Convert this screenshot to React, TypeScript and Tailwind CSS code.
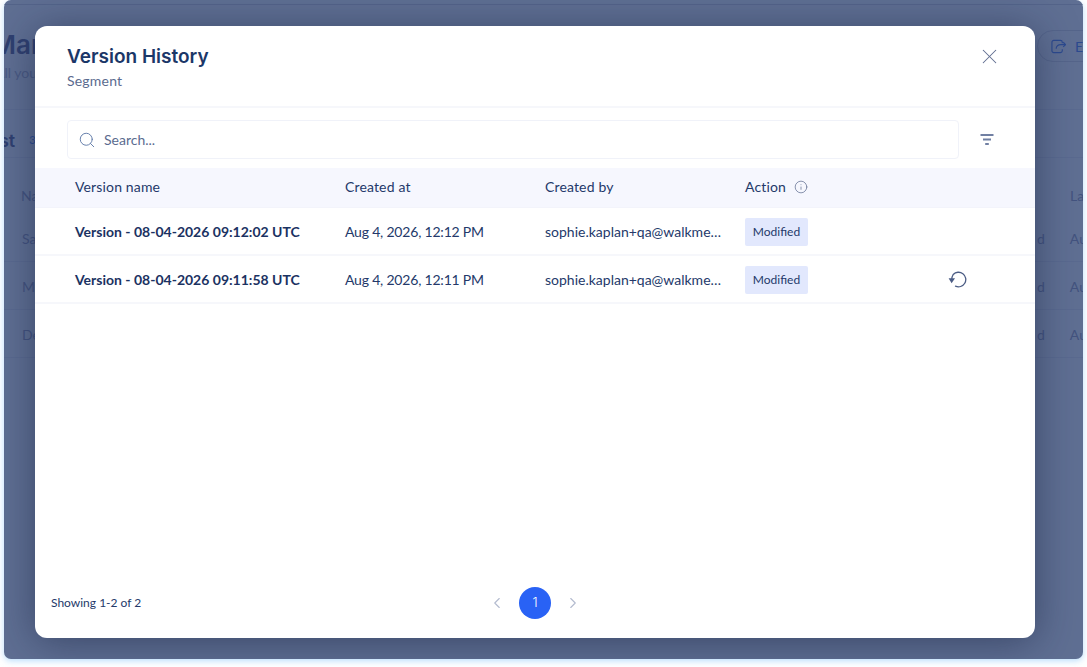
import { ChevronLeft, ChevronRight, Info, Search, X } from "lucide-react";

const VERSIONS = [
  { name: "Version - 08-04-2026 09:12:02 UTC", created: "Aug 4, 2026, 12:12 PM", restore: false },
  { name: "Version - 08-04-2026 09:11:58 UTC", created: "Aug 4, 2026, 12:11 PM", restore: true },
];

const BODY = "font-['Lato','Open_Sans',sans-serif]";

const FilterIcon = () => (
  <svg width="14" height="11" viewBox="0 0 14 11" fill="none" stroke="#7180a3" strokeWidth="1.8">
    <path d="M0.5 1h13M3 5.5h8M5.2 10h3.6" />
  </svg>
);

const RestoreIcon = () => (
  <svg width="19" height="17" viewBox="0 0 19 17" fill="none">
    <path d="M3.8 7.5C4 5.6 4.6 4.6 5.2 3.5A7.3 7.3 0 1 1 7.5 15.2" stroke="#4b5c84" strokeWidth="1.3" strokeLinecap="round" />
    <path d="M0.6 7.2h6.4L3.6 12.2z" fill="#4b5c84" />
  </svg>
);

const BackgroundPage = () => (
  <div className={`h-full text-[#43537f] ${BODY}`}>
    <div className="h-[5px] border-b border-[#54648a]" />
    <div className="flex h-[105px] items-start justify-between border-b border-[#5a6a90] pt-[25px]">
      <div>
        <p className="-ml-[12px] font-['Inter',sans-serif] text-[26px] font-semibold leading-[30px] text-[#2f4070]">Market</p>
        <p className="-ml-[9px] mt-[4px] text-[14px] leading-[18px] text-[#4a5a83]">All your segments</p>
      </div>
      <div className="-mr-[34px] flex h-[32px] w-[80px] items-center gap-[9px] rounded-full border border-[#55658b] pl-[13px] text-[14px] text-[#2c4a8f]">
        <svg width="16" height="15" viewBox="0 0 16 15" fill="none" stroke="#2c4a8f" strokeWidth="1.2">
          <path d="M12 10.5V12a2 2 0 0 1-2 2H3a2 2 0 0 1-2-2V3a2 2 0 0 1 2-2h7a2 2 0 0 1 2 2v1M5.5 10c0-3 2-4.5 5-4.5h5M13 3l2.5 2.5L13 8" />
        </svg>
        Export
      </div>
    </div>
    <div className="flex h-[48px] items-center gap-[14px] border-b border-[#5a6a90] pt-[14px]">
      <span className="-ml-[20px] font-['Inter',sans-serif] text-[18px] font-semibold text-[#2f4070]">List</span>
      <span className="text-[11px] text-[#2c4a8f]">3</span>
    </div>
    <div className="mt-[18px] flex h-[38px] items-center justify-between pl-[17px] text-[14px]">
      <span>Name</span>
      <span className="w-[13px] overflow-hidden whitespace-nowrap">Last</span>
    </div>
    {["Sales", "Marketing", "Design"].map((row) => (
      <div key={row} className="flex h-[48px] items-center justify-between border-b border-[#5a6a90] pl-[18px] pt-[1px] text-[14px]">
        <span>{row}</span>
        <span className="w-[46px] overflow-hidden whitespace-nowrap">
          <span className="mr-[25px]">d</span>Aug
        </span>
      </div>
    ))}
  </div>
);

const VersionModal = () => (
  <div className={`absolute left-[31px] top-[26px] flex h-[612px] w-[1000px] flex-col rounded-[12px] bg-white text-[#1b3262] shadow-[0_4px_40px_rgba(20,30,60,0.5)] ${BODY}`}>
    <div className="flex h-[82px] items-start justify-between border-b-2 border-[#f6f7fb] pl-[32px] pr-[33px] pt-[17px]">
      <div>
        <h2 className="font-['Inter',sans-serif] text-[19px] font-semibold leading-[28px] text-[#1b3768]">Version History</h2>
        <p className="mt-[1px] text-[14px] leading-[18px] tracking-[0.2px] text-[#5b6b8f]">Segment</p>
      </div>
      <X className="mt-[1px] size-[25px] text-[#5f6d90]" strokeWidth={1} />
    </div>
    <div className="flex items-center pl-[32px] pr-[40px] pt-[12px]">
      <div className="flex h-[39px] w-[892px] items-center gap-[8px] rounded-[4px] border border-[#f0f2f9] pl-[10px]">
        <Search className="size-[18px] text-[#5f7aa8]" strokeWidth={1.25} />
        <span className="text-[14px] text-[#5b6b8f]">Search...</span>
      </div>
      <div className="ml-[21px]">
        <FilterIcon />
      </div>
    </div>
    <div className="mt-[9px] grid h-[40px] grid-cols-[270px_200px_200px_1fr] items-center border-b border-[#f3f4fb] bg-[#f6f7fe] pb-[2px] pl-[40px] text-[14px] tracking-[0.15px] text-[#24396a]">
      <span>Version name</span>
      <span>Created at</span>
      <span>Created by</span>
      <span className="flex items-center gap-[8px]">
        Action
        <Info className="size-[14px] text-[#5f6d90]" strokeWidth={1.25} />
      </span>
    </div>
    {VERSIONS.map((version) => (
      <div
        key={version.name}
        className="grid h-[48px] grid-cols-[270px_200px_200px_1fr] items-center border-b-2 border-[#f6f7fb] pl-[40px] text-[14px]"
      >
        <span className="font-bold text-[#1b3262]">{version.name}</span>
        <span className="tracking-[-0.2px] text-[#24396a]">{version.created}</span>
        <span className="w-[177px] truncate text-[#24396a]">sophie.kaplan+qa@walkme.com</span>
        <div className="flex items-center justify-between pr-[68px]">
          <span className="mt-[2px] flex h-[28px] w-[63px] items-center justify-center rounded-[2px] bg-[#e2e8fd] text-[12px] text-[#24396a]">
            Modified
          </span>
          {version.restore && <RestoreIcon />}
        </div>
      </div>
    ))}
    <div className="relative mt-auto flex h-[70px] items-start justify-center pt-[19px]">
      <span className="absolute left-[16px] top-[27px] text-[12px] leading-[16px] text-[#24396a]">Showing 1-2 of 2</span>
      <div className="flex items-center gap-[13px]">
        <ChevronLeft className="size-[18px] text-[#b3bbcf]" strokeWidth={1.5} />
        <span className="flex size-[32px] items-center justify-center rounded-full bg-[#2962f5] font-['Inter',sans-serif] text-[13px] font-light text-white">1</span>
        <ChevronRight className="size-[18px] text-[#b3bbcf]" strokeWidth={1.5} />
      </div>
    </div>
  </div>
);

export default function App() {
  return (
    <div className="h-[667px] w-[1087px] overflow-hidden bg-white">
      <div className="relative mx-[4px] h-[659px] w-[1079px] overflow-hidden rounded-[7px] bg-[#5f6f93] shadow-[0_2px_6px_rgba(120,190,250,0.5)]">
        <BackgroundPage />
        <VersionModal />
      </div>
    </div>
  );
}
